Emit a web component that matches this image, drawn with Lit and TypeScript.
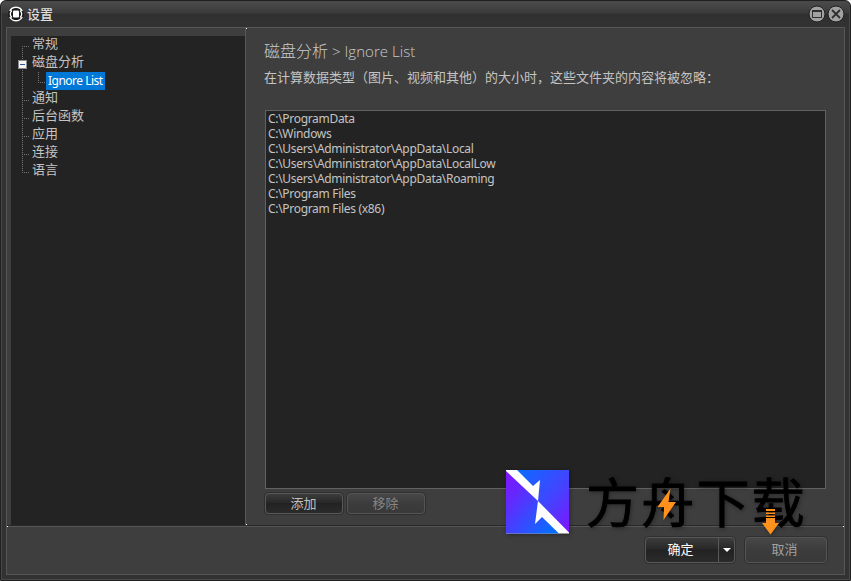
import { LitElement, html, css, svg } from "lit";
import { customElement, property, state } from "lit/decorators.js";
import { classMap } from "lit/directives/class-map.js";

interface Node {
  label: string;
  kind?: "parent" | "child";
}

const NODES: Node[] = [
  { label: "常规" },
  { label: "磁盘分析", kind: "parent" },
  { label: "Ignore List", kind: "child" },
  { label: "通知" },
  { label: "后台函数" },
  { label: "应用" },
  { label: "连接" },
  { label: "语言" },
];

const FOLDERS = [
  "C:\\ProgramData",
  "C:\\Windows",
  "C:\\Users\\Administrator\\AppData\\Local",
  "C:\\Users\\Administrator\\AppData\\LocalLow",
  "C:\\Users\\Administrator\\AppData\\Roaming",
  "C:\\Program Files",
  "C:\\Program Files (x86)",
];

@customElement("settings-tree")
class SettingsTree extends LitElement {
  @state() private selected = 2;

  static styles = css`
    :host {
      display: block;
      width: 234px;
      margin: 8px 0 0 4px;
      background: #232323;
      color: #c4c4c4;
      font: 13px/18px "Noto Sans", "Noto Sans CJK SC", sans-serif;
    }
    .row {
      display: flex;
      align-items: center;
      height: 18px;
      padding-left: 11px;
    }
    .rail {
      width: 8px;
      height: 18px;
      flex: none;
    }
    .rail svg {
      display: block;
      overflow: visible;
    }
    .label {
      height: 18px;
      line-height: 14px;
      padding: 0 2px;
      white-space: nowrap;
    }
    .child .rail {
      width: 24px;
    }
    .child .label {
      font-size: 12px;
      line-height: 18px;
      letter-spacing: -0.5px;
    }
    .selected .label {
      background: #0078d7;
      color: #fff;
    }
  `;

  private rail(node: Node, i: number) {
    const first = i === 0;
    const last = i === NODES.length - 1;
    return html`<svg width="24" height="18" shape-rendering="crispEdges">
      <path
        d="M.5 ${first ? 10 : 0}V${last ? 10 : 18}${node.kind ? "" : "M0 10.5H7"}${node.kind === "child" ? "M16.5 0V10M16 10.5H23" : ""}"
        fill="none" stroke="#767676" stroke-dasharray="1 1" />
      ${node.kind === "parent"
        ? svg`<rect x="-4" y="6" width="9" height="9" fill="#8c8c8c"/><rect x="-3" y="7" width="7" height="7" fill="#f4f4f4"/><path d="M-2 10.5H3" stroke="#3052a0"/>`
        : ""}
    </svg>`;
  }

  render() {
    return NODES.map(
      (n, i) => html`<div
        class=${classMap({ row: true, child: n.kind === "child", selected: i === this.selected })}
        @click=${() => (this.selected = i)}
      >
        <div class="rail">${this.rail(n, i)}</div>
        <div class="label">${n.label}</div>
      </div>`,
    );
  }
}

@customElement("skin-button")
class SkinButton extends LitElement {
  @property() label = "";
  @property({ type: Boolean }) split = false;

  static styles = css`
    :host {
      display: flex;
      box-sizing: border-box;
      height: 21px;
      border: 1px solid #585858;
      border-radius: 4px;
      box-shadow: 0 0 0 1px #303030;
      background: linear-gradient(#3c3c3c, #282828 45%, #222 50%, #2b2b2b);
      color: #c0c0c0;
      font: 13px/17px "Noto Sans CJK SC", sans-serif;
    }
    :host([muted]) {
      background: linear-gradient(#474747, #3c3c3c 50%, #393939);
      border-color: #545454;
      color: #858585;
    }
    :host([large]) {
      height: 26px;
      line-height: 21px;
    }
    :host([large][muted]) {
      color: #a0a0a0;
    }
    :host([split]) {
      color: #fff;
    }
    .label {
      flex: 1;
      padding-right: 1px;
      text-align: center;
    }
    :host([large]) .label {
      padding-right: 3px;
    }
    .drop {
      width: 15px;
      border-left: 1px solid #585858;
      display: flex;
      align-items: center;
      justify-content: center;
    }
  `;

  render() {
    return html`<span class="label">${this.label}</span>
      ${this.split
        ? html`<span class="drop"><svg width="8" height="4"><path d="M0 0H8L4 4Z" fill="#fff" /></svg></span>`
        : ""}`;
  }
}

@customElement("brand-mark")
class BrandMark extends LitElement {
  static styles = css`
    :host {
      display: block;
      position: absolute;
      left: 506px;
      top: 470px;
      width: 310px;
      height: 70px;
      pointer-events: none;
    }
    svg {
      display: block;
      overflow: visible;
      filter: drop-shadow(1px 1px 2px rgba(0, 0, 0, 0.35));
    }
    .name {
      font: 400 53px "Noto Sans CJK SC", sans-serif;
      letter-spacing: 2.2px;
      stroke: #000;
      stroke-width: 0.9px;
    }
  `;

  render() {
    return html`<svg width="310" height="70">
      <defs>
        <linearGradient id="lower" x1="0" y1="0" x2="0.9" y2="0.9">
          <stop offset="0" stop-color="#8014ff" />
          <stop offset="0.3" stop-color="#6428ff" />
          <stop offset="1" stop-color="#0a6cff" />
        </linearGradient>
        <linearGradient id="upper" x1="0" y1="0" x2="1" y2="1">
          <stop offset="0" stop-color="#0a6cff" />
          <stop offset="0.6" stop-color="#4840ff" />
          <stop offset="1" stop-color="#8014ff" />
        </linearGradient>
      </defs>
      <rect width="63" height="63.5" fill="#fff" />
      <path d="M11 0H63V62.500L32 31L34 10L27 16Z" fill="url(#upper)" />
      <path d="M0 1L32 31L29 54L36 47L53 63.5H0Z" fill="url(#lower)" />
      <text class="name" x="80" y="52.8">方舟下载</text>
      <path d="M164.500 18.500L151.500 37H158L157.500 50L170 32H162.500Z" fill="#ff911c" />
      <path d="M260 39H269V41H260ZM260 42.500H269V44H260ZM260 45.500H269V47H260ZM260 48H269V53H273L264.500 64.500L256 53H260Z" fill="#ff911c" />
    </svg>`;
  }
}

@customElement("app-root")
class AppRoot extends LitElement {
  static styles = css`
    :host {
      display: block;
      width: 851px;
      height: 581px;
      overflow: hidden;
      background: #fff;
      font-family: "Noto Sans", "Noto Sans CJK SC", sans-serif;
    }
    .window {
      position: relative;
      display: flex;
      flex-direction: column;
      box-sizing: border-box;
      height: 581px;
      padding: 0 5px 5px;
      border: 1px solid #202020;
      border-radius: 6px 6px 0 0;
      box-shadow: inset 0 0 0 1px #484848;
      background: linear-gradient(#4c4c4c, #3b3b3b 12px, #303030 13px, #323232 26px);
    }
    .title {
      display: flex;
      align-items: center;
      box-sizing: border-box;
      height: 26px;
      padding-bottom: 1px;
      flex: none;
      color: #dedede;
      font-size: 13px;
      line-height: 24px;
    }
    .title .app {
      margin: 0 3px 0 2px;
    }
    .title .name {
      flex: 1;
      font-weight: 500;
      font-family: "Noto Sans CJK SC", sans-serif;
    }
    .controls {
      display: flex;
      gap: 1px;
    }
    .panel {
      flex: 1;
      min-height: 0;
      display: flex;
      flex-direction: column;
      border: 1px solid #565656;
      background: #3e3e3e;
    }
    .body {
      display: flex;
      flex: none;
      height: 498px;
      border-bottom: 1px solid #292929;
      box-sizing: border-box;
      box-shadow: 0 1px #565656;
    }
    .content {
      flex: 1;
      border-left: 1px solid #585858;
      padding: 0 18px 0 19px;
      color: #c4c4c4;
    }
    h1 {
      margin: 11px 0 0 -1px;
      font: 300 16px/22px "Noto Sans CJK SC", sans-serif;
      height: 22px;
      color: #cacaca;
    }
    h1 .latin {
      font: 300 15px/22px "Open Sans", sans-serif;
      letter-spacing: 0.05px;
    }
    .note {
      margin: 6px 0 0 -1px;
      height: 20px;
      font: 13px/20px "Noto Sans CJK SC", sans-serif;
      white-space: nowrap;
    }
    .list {
      box-sizing: border-box;
      height: 379px;
      margin-top: 23px;
      padding: 0 2px;
      border: 1px solid #626262;
      background: #232323;
      font: 12px/15px "Noto Sans", sans-serif;
      letter-spacing: -0.31px;
    }
    .actions {
      display: flex;
      gap: 4px;
      margin-top: 4px;
    }
    .actions skin-button {
      width: 78px;
    }
    .footer {
      display: flex;
      justify-content: flex-end;
      gap: 10px;
      padding: 11px 17px 0 0;
    }
    .ok {
      width: 90px;
    }
    .cancel {
      width: 82px;
    }
    .handles {
      position: absolute;
      left: 0;
      top: 0;
    }
  `;

  render() {
    return html`<div class="window">
        <div class="title">
          <svg class="app" width="16" height="16" viewBox="0 0 16 16">
            <circle cx="8" cy="8" r="7.8" fill="#171717" />
            <path d="M1.800 5A7 7 0 0 1 14.200 5M14.200 11A7 7 0 0 1 1.800 11" fill="none" stroke="#fff" stroke-width="1.500" />
            <path d="M3.800 4.500Q.8 8 3.800 11.500M12.200 4.500Q15.200 8 12.200 11.500" fill="none" stroke="#fff" stroke-width="1.300" />
            <rect x="5" y="4.500" width="6" height="7" rx="1" fill="#fff" />
          </svg>
          <span class="name">设置</span>
          <div class="controls">
            <svg width="18" height="18" viewBox="0 0 18 18">
              <circle cx="9" cy="9" r="8" fill="#a2a2a2" stroke="#1f1f1f" stroke-width="1" />
              <rect x="4.500" y="5.500" width="9" height="7" fill="none" stroke="#303030" />
              <path d="M4 6H14" stroke="#303030" stroke-width="2" />
            </svg>
            <svg width="18" height="18" viewBox="0 0 18 18">
              <circle cx="9" cy="9" r="8" fill="#a2a2a2" stroke="#1f1f1f" stroke-width="1" />
              <path d="M5 5L13 13M13 5L5 13" stroke="#303030" stroke-width="1.800" />
            </svg>
          </div>
        </div>
        <div class="panel">
          <div class="body">
            <settings-tree></settings-tree>
            <div class="content">
              <h1>磁盘分析<span class="latin"> &gt; Ignore List</span></h1>
              <div class="note">在计算数据类型（图片、视频和其他）的大小时，这些文件夹的内容将被忽略：</div>
              <div class="list">${FOLDERS.map((f) => html`<div>${f}</div>`)}</div>
              <div class="actions">
                <skin-button label="添加"></skin-button>
                <skin-button muted label="移除"></skin-button>
              </div>
            </div>
          </div>
          <div class="footer">
            <skin-button class="ok" large split label="确定"></skin-button>
            <skin-button class="cancel" large muted label="取消"></skin-button>
          </div>
        </div>
        <svg class="handles" width="849" height="579" fill="#fff">
          <rect x="245" y="27" width="1" height="1" />
          <rect x="245" y="523" width="1" height="1" />
          <rect x="6" y="525" width="1" height="1" />
          <rect x="842" y="525" width="1" height="1" />
        </svg>
      </div>
      <brand-mark></brand-mark>`;
  }
}
